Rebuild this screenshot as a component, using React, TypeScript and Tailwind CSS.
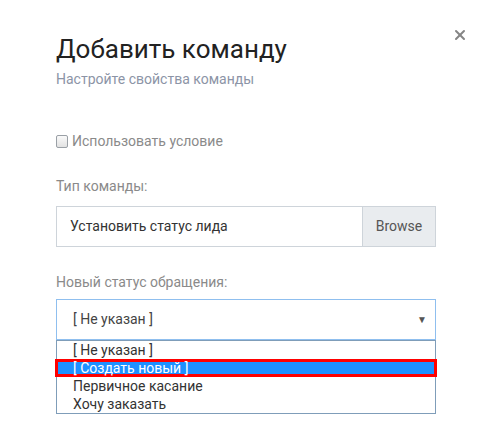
import { X } from "lucide-react";

const options = ["[ Не указан ]", "[ Создать новый ]", "Первичное касание", "Хочу заказать"];

export default function App() {
  return (
    <div className="relative w-[491px] h-[434px] bg-white overflow-hidden font-['Roboto',sans-serif]">
      {/* close */}
      <button className="absolute left-[452px] top-[27px] text-[#858585]">
        <X size={16} strokeWidth={3} />
      </button>

      <div className="pl-[56px] pr-[55px] pt-[33px]">
        <h2 className="text-[26px] leading-[32px] text-[#222]">Добавить команду</h2>
        <p className="mt-[4px] text-[14px] leading-[20px] text-[#8c94a6]">
          Настройте свойства команды
        </p>

        <label className="mt-[43px] flex items-center gap-[4px] text-[14px] leading-[18px] text-[#8a8a8a]">
          <span className="w-[12px] h-[13px] rounded-[2px] border border-[#9aa0a6] bg-gradient-to-b from-[#fafafa] to-[#e2e2e2]" />
          Использовать условие
        </label>

        <p className="mt-[27px] text-[14px] leading-[18px] text-[#8a8a8a]">Тип команды:</p>
        <div className="mt-[11px] flex h-[41px] border border-[#ced4da]">
          <div className="flex-1 flex items-center pl-[13px] text-[14px] text-[#333]">
            Установить статус лида
          </div>
          <div className="w-[73px] flex items-center justify-center border-l border-[#ced4da] bg-[#e9ecef] text-[14px] text-[#555]">
            Browse
          </div>
        </div>

        <p className="mt-[26px] text-[14px] leading-[18px] text-[#8a8a8a]">Новый статус обращения:</p>
        <div className="mt-[8px] flex h-[41px] items-center justify-between border border-[#8fbfef] pl-[16px] pr-[8px] text-[14px] text-[#444]">
          <span>[ Не указан ]</span>
          <span className="text-[10px] text-[#555]">▼</span>
        </div>
        <ul className="border border-[#7f9db9] text-[14px] leading-[18px] text-[#333]">
          {options.map((o, i) =>
            i === 1 ? (
              <li
                key={o}
                className="-mx-[2px] border-[3px] border-[#ff0000] bg-[#1e90ff] pl-[15px] leading-[12px] text-white"
              >
                {o}
              </li>
            ) : (
              <li key={o} className="pl-[16px]">
                {o}
              </li>
            )
          )}
        </ul>
      </div>
    </div>
  );
}
